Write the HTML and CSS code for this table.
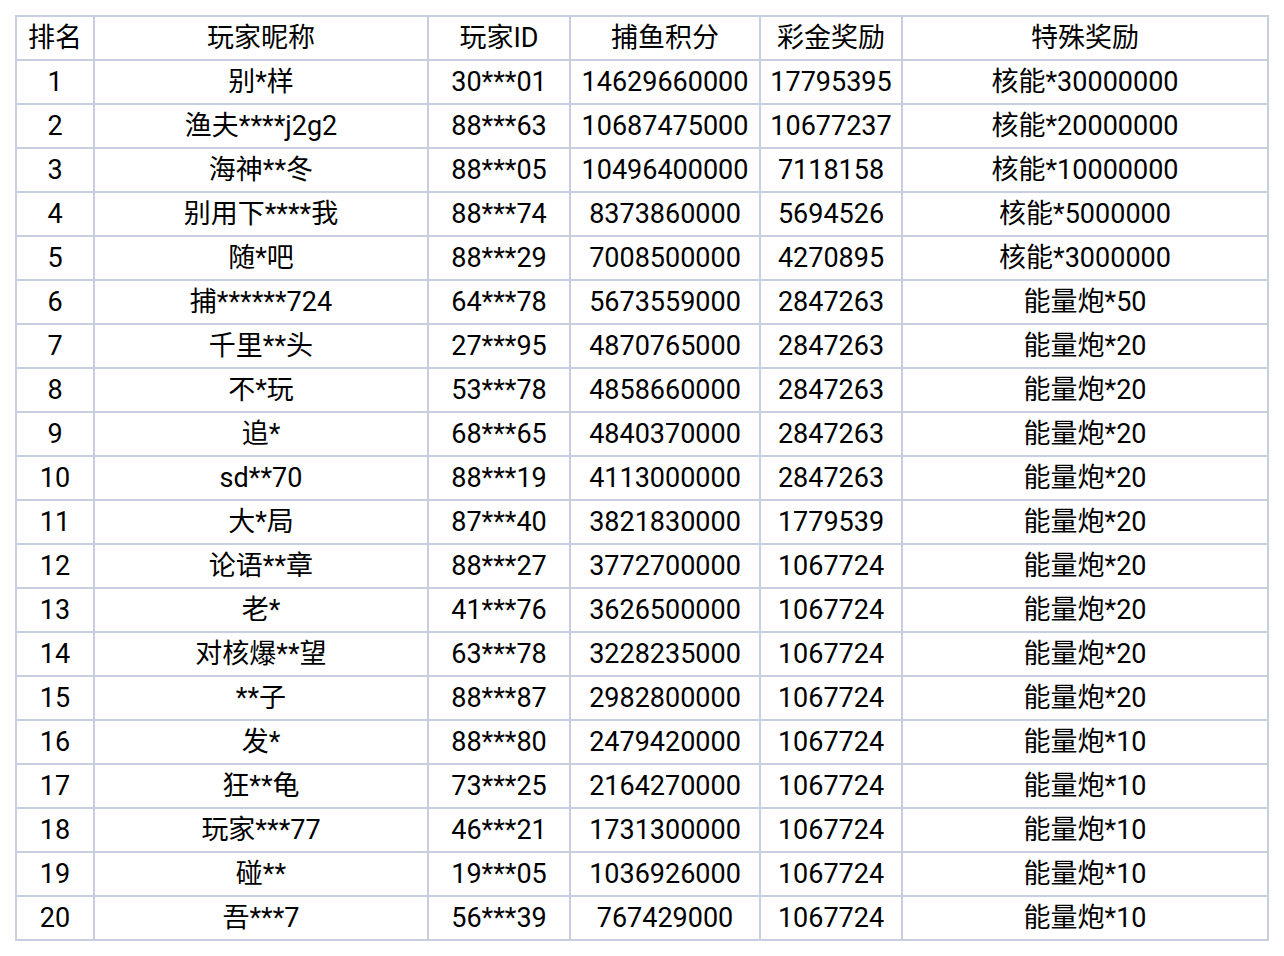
FILE: index.html
```html
<!DOCTYPE html>
<html lang="zh-CN">
<head>
<meta charset="utf-8">
<title>捕鱼排行榜</title>
<link rel="stylesheet" href="styles.css">
</head>
<body>
<table class="rank">
<colgroup>
<col class="c-rank"><col class="c-name"><col class="c-id"><col class="c-score"><col class="c-bonus"><col class="c-special">
</colgroup>
<thead>
<tr><th>排名</th><th>玩家昵称</th><th>玩家ID</th><th>捕鱼积分</th><th>彩金奖励</th><th>特殊奖励</th></tr>
</thead>
<tbody>
<tr><td>1</td><td>别*样</td><td>30***01</td><td>14629660000</td><td>17795395</td><td>核能*30000000</td></tr>
<tr><td>2</td><td>渔夫****j2g2</td><td>88***63</td><td>10687475000</td><td>10677237</td><td>核能*20000000</td></tr>
<tr><td>3</td><td>海神**冬</td><td>88***05</td><td>10496400000</td><td>7118158</td><td>核能*10000000</td></tr>
<tr><td>4</td><td>别用下****我</td><td>88***74</td><td>8373860000</td><td>5694526</td><td>核能*5000000</td></tr>
<tr><td>5</td><td>随*吧</td><td>88***29</td><td>7008500000</td><td>4270895</td><td>核能*3000000</td></tr>
<tr><td>6</td><td>捕******724</td><td>64***78</td><td>5673559000</td><td>2847263</td><td>能量炮*50</td></tr>
<tr><td>7</td><td>千里**头</td><td>27***95</td><td>4870765000</td><td>2847263</td><td>能量炮*20</td></tr>
<tr><td>8</td><td>不*玩</td><td>53***78</td><td>4858660000</td><td>2847263</td><td>能量炮*20</td></tr>
<tr><td>9</td><td>追*</td><td>68***65</td><td>4840370000</td><td>2847263</td><td>能量炮*20</td></tr>
<tr><td>10</td><td>sd**70</td><td>88***19</td><td>4113000000</td><td>2847263</td><td>能量炮*20</td></tr>
<tr><td>11</td><td>大*局</td><td>87***40</td><td>3821830000</td><td>1779539</td><td>能量炮*20</td></tr>
<tr><td>12</td><td>论语**章</td><td>88***27</td><td>3772700000</td><td>1067724</td><td>能量炮*20</td></tr>
<tr><td>13</td><td>老*</td><td>41***76</td><td>3626500000</td><td>1067724</td><td>能量炮*20</td></tr>
<tr><td>14</td><td>对核爆**望</td><td>63***78</td><td>3228235000</td><td>1067724</td><td>能量炮*20</td></tr>
<tr><td>15</td><td>**子</td><td>88***87</td><td>2982800000</td><td>1067724</td><td>能量炮*20</td></tr>
<tr><td>16</td><td>发*</td><td>88***80</td><td>2479420000</td><td>1067724</td><td>能量炮*10</td></tr>
<tr><td>17</td><td>狂**龟</td><td>73***25</td><td>2164270000</td><td>1067724</td><td>能量炮*10</td></tr>
<tr><td>18</td><td>玩家***77</td><td>46***21</td><td>1731300000</td><td>1067724</td><td>能量炮*10</td></tr>
<tr><td>19</td><td>碰**</td><td>19***05</td><td>1036926000</td><td>1067724</td><td>能量炮*10</td></tr>
<tr><td>20</td><td>吾***7</td><td>56***39</td><td>767429000</td><td>1067724</td><td>能量炮*10</td></tr>
</tbody>
</table>
</body>
</html>
```
FILE: styles.css
```css
html, body {
  margin: 0;
  padding: 0;
  background: #ffffff;
}

body {
  font-family: Roboto, "Noto Sans CJK SC", sans-serif;
  font-size: 27px;
  color: #000000;
}

.rank {
  margin: 15px 0 0 15px;
  width: 1254px;
  table-layout: fixed;
  border-collapse: separate;
  border-spacing: 0;
  border-top: 2px solid #c8cedf;
  border-left: 2px solid #c8cedf;
}

.c-rank { width: 78px; }
.c-name { width: 334px; }
.c-id { width: 142px; }
.c-score { width: 190px; }
.c-bonus { width: 142px; }
.c-special { width: 366px; }

.rank th,
.rank td {
  box-sizing: border-box;
  height: 44px;
  padding: 1px 0 0;
  border-right: 2px solid #c8cedf;
  border-bottom: 2px solid #c8cedf;
  text-align: center;
  vertical-align: middle;
  white-space: nowrap;
  font-weight: normal;
  line-height: 41px;
}
```
